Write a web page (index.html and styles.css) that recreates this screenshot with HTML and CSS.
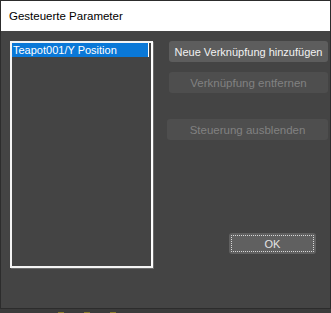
FILE: index.html
```html
<!DOCTYPE html>
<html lang="de">
<head>
  <meta charset="UTF-8">
  <title>Gesteuerte Parameter</title>
  <link rel="stylesheet" href="styles.css">
</head>
<body>
  <div class="dialog">
    <div class="title-bar">Gesteuerte Parameter</div>
    <div class="dialog-body">
      <div class="param-list">
        <div class="param-item selected">Teapot001/Y Position</div>
      </div>
      <div class="side">
        <button class="btn">Neue Verknüpfung hinzufügen</button>
        <button class="btn" disabled>Verknüpfung entfernen</button>
        <button class="btn wide gap" disabled>Steuerung ausblenden</button>
        <button class="btn ok">OK</button>
      </div>
    </div>
  </div>
  <div class="desk">
    <span class="mark"></span><span class="mark"></span><span class="mark"></span>
  </div>
</body>
</html>
```

FILE: styles.css
```css
body {
  margin: 0;
  background: #3b3b3b;
  font-family: "Liberation Sans", Arial, sans-serif;
  font-size: 11px;
  width: 331px;
  height: 313px;
  overflow: hidden;
}

.dialog {
  width: 329px;
  height: 307px;
  border: 1px solid #2c2c2c;
  background: #444444;
  display: flex;
  flex-direction: column;
}

.title-bar {
  height: 30px;
  background: #fff;
  color: #000;
  font-family: "Liberation Sans", Arial, sans-serif;
  font-size: 11.5px;
  line-height: 30px;
  padding-left: 8px;
  flex: none;
}

.dialog-body {
  display: flex;
  padding: 10px 0 0 9px;
  flex: 1;
}

.param-list {
  width: 139px;
  height: 223px;
  border: 2px solid #f4f4f4;
  border-right-color: #ffffff;
  box-shadow: 1px 1px 0 #6a6a6a;
  background: #444444;
  flex: none;
}

.param-item {
  height: 14px;
  line-height: 14px;
  padding-left: 1px;
  margin-right: 2px;
  color: #fff;
  font-size: 11px;
  white-space: nowrap;
}

.param-item.selected {
  background: #0a78d7;
  border-right: 1px solid #fff;
}

.side {
  display: flex;
  flex-direction: column;
  align-items: flex-start;
  padding-left: 16px;
}

.btn {
  font-family: "Liberation Sans", Arial, sans-serif;
  font-size: 11px;
  white-space: nowrap;
  width: 159px;
  height: 21px;
  padding: 0;
  margin-bottom: 10px;
  border: none;
  border-radius: 3px;
  background: #5d5d5d;
  color: #f2f2f2;
}

.btn:disabled {
  font-size: 11.5px;
  background: #4e4e4e;
  color: #818181;
}

.btn.wide {
  width: 161px;
  margin-left: -2px;
}

.btn.gap {
  margin-top: 16px;
}

.btn.ok {
  width: 87px;
  margin-top: 83px;
  margin-left: 60px;
  background: #606060;
  color: #e4e4e4;
  outline: 1px dotted #d8d8d8;
  outline-offset: -3px;
}

.desk {
  display: flex;
  gap: 20px;
  padding: 3px 0 0 58px;
}

.mark {
  width: 6px;
  height: 2px;
  background: #8a7a2a;
}
```
